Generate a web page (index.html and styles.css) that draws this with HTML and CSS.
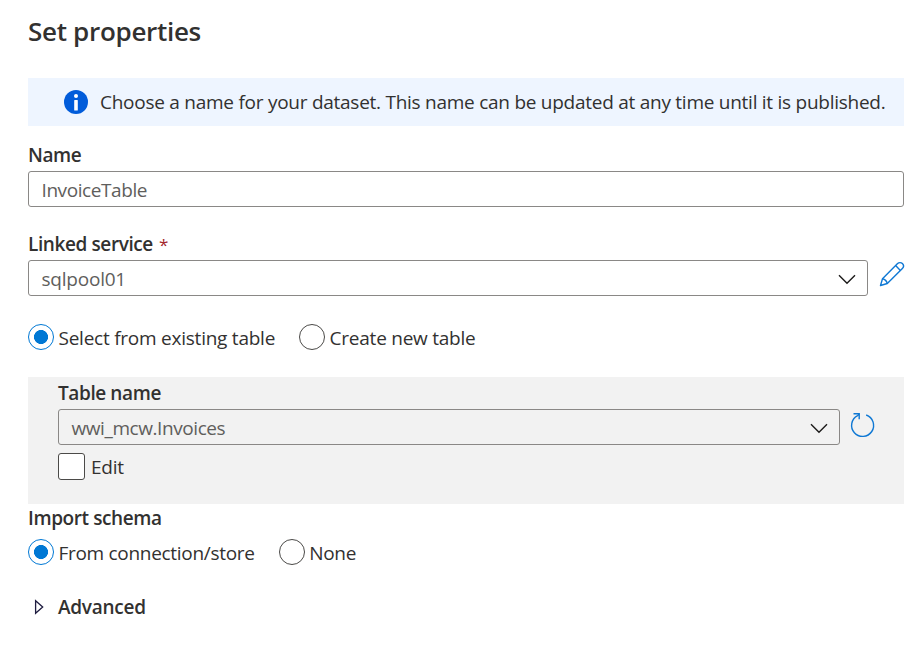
FILE: index.html
```html
<!DOCTYPE html>
<html lang="en">
<head>
<meta charset="utf-8">
<title>Set properties</title>
<link rel="stylesheet" href="styles.css">
</head>
<body>
<main class="form">
  <h1 class="title">Set properties</h1>
  <div class="banner">
    <svg class="info" width="24" height="24" viewBox="0 0 24 24"><circle cx="12" cy="12" r="12" fill="#015cda"/><circle cx="12" cy="6" r="2" fill="#fff"/><rect x="10.2" y="10" width="3.6" height="10.5" rx=".6" fill="#fff"/></svg>
    <span>Choose a name for your dataset. This name can be updated at any time until it is published.</span>
  </div>

  <div class="label name-label"><span>Name</span></div>
  <div class="field"><span>InvoiceTable</span></div>

  <div class="label linked-label"><span>Linked service</span><span class="required">*</span></div>
  <div class="row">
    <div class="field grow"><span class="service">sqlpool01</span>
      <svg class="chevron" width="18" height="11" viewBox="0 0 18 11"><path d="M1 1.2l8 8 8-8" fill="none" stroke="#1b1a19" stroke-width="1.4"/></svg>
    </div>
    <svg class="pencil" width="26" height="26" viewBox="0 0 26 26" fill="none" stroke="#0f78d4" stroke-width="1.4" stroke-linejoin="round"><path d="M1.5 24.5l2-6.8L18.6 2.6a3.3 3.3 0 0 1 4.8 4.8L8.3 22.5z"/><path d="M16.6 4.6l4.8 4.8M3.5 17.7q3.8.8 4.8 4.8"/></svg>
  </div>

  <div class="radios source">
    <span class="radio on"></span><span>Select from existing table</span>
    <span class="radio second"></span><span>Create new table</span>
  </div>

  <section class="panel">
    <div class="label table-label"><span>Table name</span></div>
    <div class="row">
      <div class="field grow"><span>wwi_mcw.Invoices</span>
        <svg class="chevron" width="18" height="11" viewBox="0 0 18 11"><path d="M1 1.2l8 8 8-8" fill="none" stroke="#1b1a19" stroke-width="1.4"/></svg>
      </div>
      <svg class="refresh" width="26" height="26" viewBox="0 0 26 26" fill="none" stroke="#0f78d4" stroke-width="1.4"><path d="M16.2 3a11 11 0 1 1-8.6.6L9.3 2"/><path d="M3.5 1.8h5.7v5.4"/></svg>
    </div>
    <div class="check-row"><span class="box"></span><span>Edit</span></div>
  </section>

  <div class="label import-label"><span>Import schema</span></div>
  <div class="radios schema">
    <span class="radio on"></span><span>From connection/store</span>
    <span class="radio second"></span><span>None</span>
  </div>

  <div class="advanced">
    <svg width="10" height="16" viewBox="0 0 10 16"><path d="M1.6 1.7v12.6L8.7 8z" fill="none" stroke="#1f1d40" stroke-width="1.3"/></svg>
    <span>Advanced</span>
  </div>
</main>
</body>
</html>
```
FILE: styles.css
```css
* { box-sizing: border-box; }
body { margin: 0; background: #fff; color: #323130; font: 19px/26px "Open Sans", "Noto Sans", sans-serif; letter-spacing: -0.26px; white-space: nowrap; }
.form { width: 904px; padding: 14px 0 0 28px; }
.title { margin: 0; height: 64px; font-size: 26px; font-weight: 550; line-height: 34px; letter-spacing: -0.3px; }
.banner { display: flex; align-items: center; height: 48px; padding-left: 36px; gap: 12px; background: #eef5ff; }
.label { height: 26px; font-weight: 570; letter-spacing: -0.4px; }
.name-label { margin-top: 16px; height: 29px; }
.field { display: flex; align-items: center; justify-content: space-between; height: 36px; padding: 2px 11px 0 12.5px; border: 1px solid #8a8886; border-radius: 3px; color: #605e5c; letter-spacing: -0.42px; }
.linked-label { margin-top: 24px; height: 29px; }
.required { margin-left: 6px; color: #a4262c; font-size: 17px; font-weight: 500; }
.row { display: flex; align-items: flex-start; }
.grow { flex: 1; }
.chevron { margin-top: 1px; }
.service { letter-spacing: -0.22px; }
.pencil { margin: 1px -1px 0 11px; }
.radios { display: flex; align-items: center; height: 28px; }
.source { margin-top: 28px; letter-spacing: -0.24px; }
.radio { width: 26px; height: 26px; margin: -2px 4.5px 0 0; border: 1px solid #4b4a48; border-radius: 50%; background: #fff; }
.source .radio { margin-top: -3px; }
.radio.on { border-color: #0078d4; background: radial-gradient(circle, #0078d4 6.7px, #fff 7.3px); }
.second { margin-left: 24px; }
.schema { letter-spacing: -0.3px; }
.panel { height: 127px; margin-top: 25px; padding: 3px 28px 0 30px; background: #f2f2f2; }
.table-label { height: 29px; }
.refresh { margin: 3px 0 0 10px; }
.check-row { display: flex; align-items: center; height: 27px; margin-top: 8px; gap: 6px; }
.box { width: 27px; height: 27px; border: 1px solid #4b4a48; border-radius: 3px; background: #fff; }
.import-label { margin-top: 1px; height: 34px; }
.advanced { display: flex; align-items: center; margin-top: 27px; padding-left: 6px; gap: 14px; font-weight: 570; }
```
